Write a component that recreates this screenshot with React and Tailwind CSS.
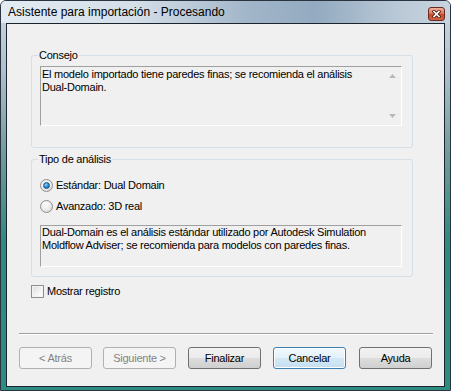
import React from 'react';

const font = { fontFamily: '"Liberation Sans", Arial, sans-serif' };

const Radio = ({ checked, label }) => (
  <label className="flex h-[13px] items-center">
    <span className="flex h-[13px] w-[13px] items-center justify-center rounded-full border border-[#8f8f8f] bg-[radial-gradient(circle_at_40%_35%,#ffffff_0%,#e8e8e8_55%,#cfcfcf_100%)]">
      {checked && (
        <span className="h-[7px] w-[7px] rounded-full border border-[#1c5a86] bg-[radial-gradient(circle_at_40%_35%,#9fd8ff_0%,#2f8fd6_45%,#0f4f86_100%)]" />
      )}
    </span>
    <span className="ml-[3px]">{label}</span>
  </label>
);

const Btn = ({ children, disabled, focused, className = '' }) => {
  let look =
    'border-[#707070] bg-[linear-gradient(to_bottom,#f2f2f2_0%,#ebebeb_48%,#dddddd_52%,#cfcfcf_100%)] text-black';
  if (disabled) look = 'border-[#adb2b5] bg-[#f4f4f4] text-[#838383]';
  if (focused)
    look =
      'border-[#3c7fb1] bg-[linear-gradient(to_bottom,#f1f8fd_0%,#e3f1fa_48%,#d3e8f6_52%,#c4dff1_100%)] text-black shadow-[inset_0_0_0_1px_#ffffff]';
  return (
    <button
      disabled={disabled}
      className={`flex h-[22px] w-[73px] items-center justify-center rounded-[3px] border ${look} ${className}`}
    >
      {children}
    </button>
  );
};

export default function App() {
  return (
    <div className="h-[391px] w-[451px] overflow-hidden bg-white" style={font}>
      <div className="flex h-full w-full flex-col rounded-t-[6px] border border-[#2a3440] bg-[linear-gradient(to_bottom,#cdd9e4_0%,#aebfcd_18%,#6e9a9a_40%,#2f8a80_62%,#2c8d80_100%)]">
        {/* title bar */}
        <div className="flex h-[22px] shrink-0 items-start justify-between rounded-t-[5px] bg-[linear-gradient(to_right,#e4ecf3_0%,#d3dee8_30%,#a2b6c9_55%,#93aac0_70%,#b9c8d6_88%,#c8d4df_100%)] pl-[7px] pr-[5px]">
          <span className="pt-[4px] text-[12px] leading-[14px] text-black">
            Asistente para importación - Procesando
          </span>
          <span className="mt-[6px] flex h-[14px] w-[17px] items-center justify-center rounded-[3px] border border-[#6b2a1c] bg-[linear-gradient(to_bottom,#eeb09c_0%,#dc7a60_45%,#c6482c_55%,#d0644a_100%)]">
            <svg width="9" height="8" viewBox="0 0 9 8">
              <path d="M2 1.5 L7 6.5 M7 1.5 L2 6.5" stroke="#4a1a10" strokeWidth="3.2" strokeLinecap="square" />
              <path d="M2 1.5 L7 6.5 M7 1.5 L2 6.5" stroke="#ffffff" strokeWidth="1.6" strokeLinecap="square" />
            </svg>
          </span>
        </div>

        {/* client */}
        <div className="flex-1 px-[5px] pb-[3px]">
          <div className="h-full border border-[#1b232c] bg-[#f0f0f0] text-[11px] leading-[13px] tracking-[-0.25px] text-black">
            {/* Consejo */}
            <fieldset className="ml-[24px] mt-[25px] w-[382px] rounded-[3px] border border-[#d5dfe5]">
              <legend className="ml-[6px] px-[1px]">Consejo</legend>
              <div className="ml-[8px] mt-[4px] mb-[21px] flex h-[60px] w-[362px] border-b border-l border-r border-t border-b-white border-l-[#a0a0a0] border-r-white border-t-[#a0a0a0]">
                <p className="flex-1 pl-[1px] pt-[1px]">
                  El modelo importado tiene paredes finas; se recomienda el análisis
                  <br />
                  Dual-Domain.
                </p>
                <div className="flex w-[17px] flex-col items-center justify-between py-[7px]">
                  <svg width="7" height="4" viewBox="0 0 7 4">
                    <path d="M0 4 L3.5 0 L7 4 Z" fill="#b8b8b8" />
                  </svg>
                  <svg width="7" height="4" viewBox="0 0 7 4">
                    <path d="M0 0 L3.5 4 L7 0 Z" fill="#b8b8b8" />
                  </svg>
                </div>
              </div>
            </fieldset>

            {/* Tipo de análisis */}
            <fieldset className="ml-[24px] mt-[5px] w-[382px] rounded-[3px] border border-[#d5dfe5]">
              <legend className="ml-[6px] px-[1px]">Tipo de análisis</legend>
              <div className="ml-[8px] mt-[13px] flex flex-col gap-[8px]">
                <Radio checked label="Estándar: Dual Domain" />
                <Radio label="Avanzado: 3D real" />
              </div>
              <div className="ml-[8px] mt-[12px] mb-[9px] h-[42px] w-[362px] border-b border-l border-r border-t border-b-white border-l-[#a0a0a0] border-r-white border-t-[#a0a0a0] pl-[1px]">
                Dual-Domain es el análisis estándar utilizado por Autodesk Simulation
                <br />
                Moldflow Adviser; se recomienda para modelos con paredes finas.
              </div>
            </fieldset>

            {/* Mostrar registro */}
            <label className="ml-[24px] mt-[8px] flex h-[13px] items-center">
              <span className="h-[13px] w-[13px] border border-[#8f8f8f] bg-[linear-gradient(135deg,#dcdcdc_0%,#f4f4f4_60%,#ffffff_100%)] shadow-[inset_0_0_0_1px_#f4f4f4]" />
              <span className="ml-[3px]">Mostrar registro</span>
            </label>

            <div className="ml-[12px] mt-[35px] w-[414px] border-b border-t border-b-white border-t-[#a0a0a0]" />

            <div className="ml-[12px] mt-[12px] flex">
              <Btn disabled>&lt; Atrás</Btn>
              <Btn disabled className="ml-[11px]">
                Siguiente &gt;
              </Btn>
              <Btn className="ml-[12px]">Finalizar</Btn>
              <Btn focused className="ml-[12px]">
                Cancelar
              </Btn>
              <Btn className="ml-[13px]">Ayuda</Btn>
            </div>
          </div>
        </div>
      </div>
    </div>
  );
}
